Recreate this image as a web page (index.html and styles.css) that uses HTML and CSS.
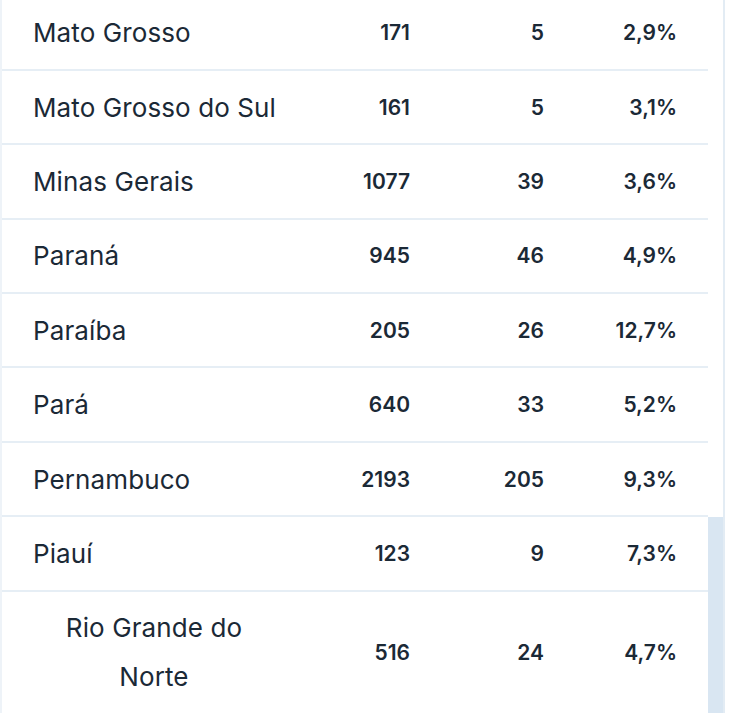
FILE: index.html
```html
<!DOCTYPE html>
<html lang="pt">
<head>
<meta charset="utf-8">
<link rel="stylesheet" href="styles.css">
</head>
<body>
<div class="frame">
  <div class="table">
    <div class="row"><div class="name">Mato Grosso</div><div class="num">171</div><div class="num">5</div><div class="num">2,9%</div></div>
    <div class="row"><div class="name">Mato Grosso do Sul</div><div class="num">161</div><div class="num">5</div><div class="num">3,1%</div></div>
    <div class="row"><div class="name">Minas Gerais</div><div class="num">1077</div><div class="num">39</div><div class="num">3,6%</div></div>
    <div class="row"><div class="name">Paraná</div><div class="num">945</div><div class="num">46</div><div class="num">4,9%</div></div>
    <div class="row"><div class="name">Paraíba</div><div class="num">205</div><div class="num">26</div><div class="num">12,7%</div></div>
    <div class="row"><div class="name">Pará</div><div class="num">640</div><div class="num">33</div><div class="num">5,2%</div></div>
    <div class="row"><div class="name">Pernambuco</div><div class="num">2193</div><div class="num">205</div><div class="num">9,3%</div></div>
    <div class="row"><div class="name">Piauí</div><div class="num">123</div><div class="num">9</div><div class="num">7,3%</div></div>
    <div class="row"><div class="name name-wrap">Rio Grande do<br>Norte</div><div class="num">516</div><div class="num">24</div><div class="num">4,7%</div></div>
  </div>
  <div class="scrollbar"><div class="thumb"></div></div>
</div>
</body>
</html>
```
FILE: styles.css
```css
html, body {
  margin: 0;
  padding: 0;
  background: #ffffff;
}
body {
  width: 730px;
  height: 713px;
  overflow: hidden;
  font-family: Inter, "Noto Sans", sans-serif;
  color: #1b2936;
}
.frame {
  display: flex;
  height: 713px;
  overflow: hidden;
}
.table {
  width: 708px;
  border-left: 2px solid #eef3f8;
  margin-top: -3.4px;
}
.row {
  display: grid;
  grid-template-columns: 242px 135px 134px 133px;
  align-items: center;
  padding: 11.7px 31px 11.7px 31px;
  border-bottom: 2px solid #e6eef5;
  box-sizing: border-box;
}
.name {
  font-size: 26px;
  line-height: 49px;
  white-space: nowrap;
  letter-spacing: 0.1px;
}
.name-wrap {
  text-align: center;
}
.num {
  font-size: 21px;
  font-weight: 600;
  text-align: right;
  line-height: 49px;
}
.scrollbar {
  width: 22px;
  display: flex;
  flex-direction: column;
  justify-content: flex-end;
  box-sizing: border-box;
  position: relative;
}
.scrollbar::after {
  content: "";
  position: absolute;
  top: 0;
  bottom: 0;
  left: 15px;
  width: 2px;
  background: #e3ecf4;
}
.thumb {
  height: 196px;
  width: 15px;
  background: #d9e6f2;
}
```
